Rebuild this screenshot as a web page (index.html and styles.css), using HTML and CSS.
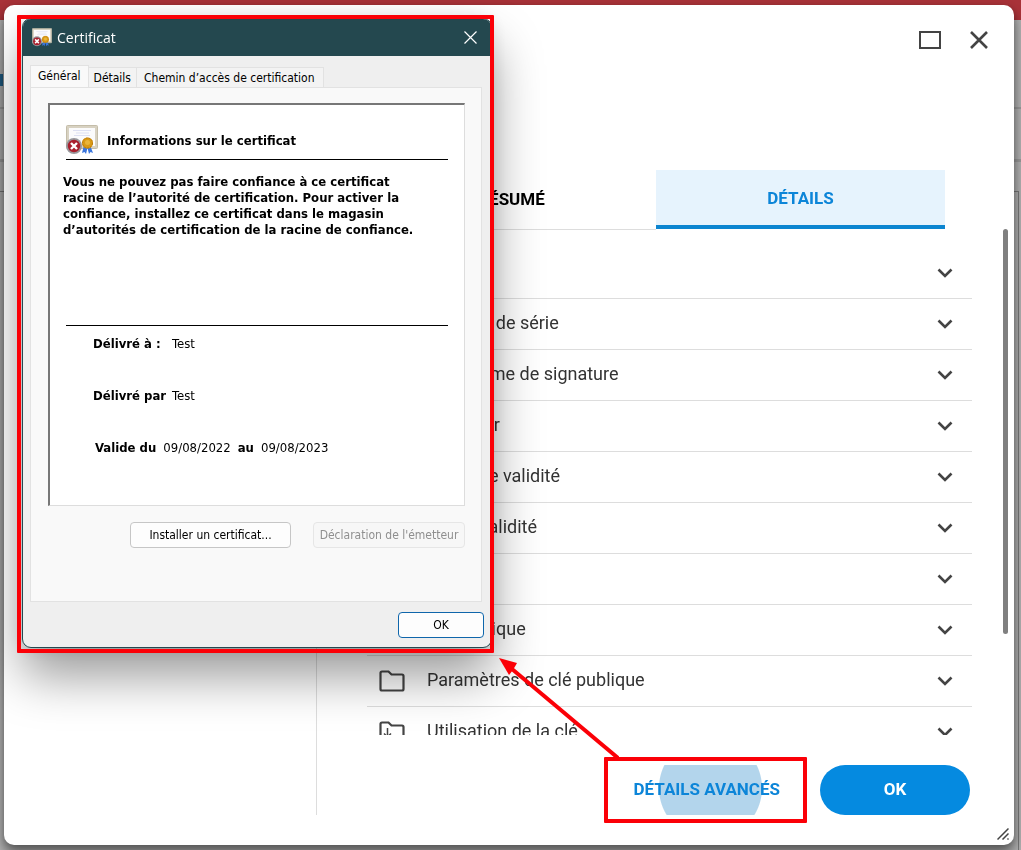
FILE: index.html
```html
<!DOCTYPE html>
<html lang="fr">
<head>
  <meta charset="UTF-8">
  <meta name="viewport" content="width=device-width, initial-scale=1.0">
  <title>Certificat</title>
  <link rel="stylesheet" href="styles.css">
</head>
<body>
  <svg class="sprite" aria-hidden="true">
    <symbol id="chevron" viewBox="0 0 16 16"><path d="M1.500 4.500L8 11l6.500-6.500" fill="none" stroke="#444" stroke-width="2.600"/></symbol>
    <symbol id="folder" viewBox="0 0 26 22"><path d="M1.500 19V3q0-1.500 1.500-1.500h6.500l3 3H23q1.500 0 1.500 1.500v13q0 1.500-1.500 1.500H3Q1.500 20.500 1.500 19z" fill="none" stroke="#444" stroke-width="2.200"/></symbol>
    <symbol id="cert" viewBox="0 0 32 30">
      <rect x="0.500" y="0.500" width="31" height="23" rx="1" fill="#d8d2c2" stroke="#c4bda9"/>
      <rect x="3" y="3" width="26" height="18" fill="#fbfbfc"/>
      <path d="M7 5.500h18M10 8h13M8 10.500h16" stroke="#dde0f2"/>
      <path d="M18 20l-2 8 2.500-1 1.500 2 2-8zM24 20l3 8-2.500-1-1.500 2-2-8z" fill="#3a75dc"/>
      <circle cx="21.500" cy="18" r="5.500" fill="#d99a16"/>
      <circle cx="21.500" cy="18" r="5" fill="none" stroke="#b9780a" stroke-dasharray="2 1"/>
      <circle cx="21.500" cy="17.500" r="2.500" fill="#e9b53a"/>
      <circle cx="8" cy="21" r="8" fill="#98989c"/>
      <circle cx="8" cy="21" r="6.200" fill="#a91f2d"/>
      <path d="M5 18l6 6M11 18l-6 6" stroke="#fff" stroke-width="2.400"/>
    </symbol>
  </svg>

  <div class="page">
    <div class="topbar"></div>
    <div class="page-head"></div>
    <div class="page-tools"></div>
    <div class="page-row"></div>
    <div class="page-content"></div>
  </div>

  <main class="modal">
    <header class="modal-head">
      <button class="icon-btn" type="button" aria-label="Agrandir"><svg width="22" height="18" viewBox="0 0 22 18"><rect x="1" y="1" width="20" height="16" fill="none" stroke="#444" stroke-width="2"/></svg></button>
      <button class="icon-btn" type="button" aria-label="Fermer"><svg width="18" height="18" viewBox="0 0 18 18"><path d="M1 1l16 16M17 1L1 17" stroke="#444" stroke-width="2.600"/></svg></button>
    </header>
    <div class="modal-body">
      <aside class="tree"></aside>
      <section class="content">
        <div class="tabs">
          <button class="tab" type="button">RÉSUMÉ</button>
          <button class="tab active" type="button">DÉTAILS</button>
        </div>
        <ul class="fields">
          <li><svg class="folder"><use href="#folder"/></svg><span>Version</span><svg class="chevron"><use href="#chevron"/></svg></li>
          <li><svg class="folder"><use href="#folder"/></svg><span>Numéro de série</span><svg class="chevron"><use href="#chevron"/></svg></li>
          <li><svg class="folder"><use href="#folder"/></svg><span>Algorithme de signature</span><svg class="chevron"><use href="#chevron"/></svg></li>
          <li><svg class="folder"><use href="#folder"/></svg><span>Émetteur</span><svg class="chevron"><use href="#chevron"/></svg></li>
          <li><svg class="folder"><use href="#folder"/></svg><span>Début de validité</span><svg class="chevron"><use href="#chevron"/></svg></li>
          <li><svg class="folder"><use href="#folder"/></svg><span>Fin de validité</span><svg class="chevron"><use href="#chevron"/></svg></li>
          <li><svg class="folder"><use href="#folder"/></svg><span>Objet</span><svg class="chevron"><use href="#chevron"/></svg></li>
          <li><svg class="folder"><use href="#folder"/></svg><span>Clé publique</span><svg class="chevron"><use href="#chevron"/></svg></li>
          <li><svg class="folder"><use href="#folder"/></svg><span>Paramètres de clé publique</span><svg class="chevron"><use href="#chevron"/></svg></li>
          <li><svg class="folder" viewBox="0 0 26 22"><use href="#folder"/><path d="M8.500 7v9M5 12.500l3.500 3.500 3.500-3.500" fill="none" stroke="#444" stroke-width="1.500"/></svg><span>Utilisation de la clé</span><svg class="chevron"><use href="#chevron"/></svg></li>
        </ul>
        <footer class="actions">
          <button class="btn-text" type="button">DÉTAILS AVANCÉS</button>
          <button class="btn-main" type="button">OK</button>
        </footer>
      </section>
    </div>
    <div class="scroll-thumb"></div>
    <svg class="grip" viewBox="0 0 12 12"><path d="M0.500 11.500l11-11M5.500 11.500l6-6M10.500 11.500l1-1" stroke="#444" stroke-width="1.500"/></svg>
  </main>

  <section class="dialog">
    <header class="dialog-title">
      <svg width="20" height="19"><use href="#cert"/></svg>
      <h1>Certificat</h1>
      <button type="button" aria-label="Fermer"><svg width="13" height="13" viewBox="0 0 13 13"><path d="M0.500 0.500l12 12M12.500 0.500l-12 12" stroke="#fff" stroke-width="1.200"/></svg></button>
    </header>
    <div class="dialog-body">
      <div class="dialog-tabs">
        <button class="active" type="button">Général</button>
        <button type="button">Détails</button>
        <button type="button">Chemin d’accès de certification</button>
      </div>
      <div class="panel">
        <div class="info">
          <div class="info-head">
            <svg width="32" height="30"><use href="#cert"/></svg>
            <h2>Informations sur le certificat</h2>
          </div>
          <p class="warning">Vous ne pouvez pas faire confiance à ce certificat<br>racine de l’autorité de certification. Pour activer la<br>confiance, installez ce certificat dans le magasin<br>d’autorités de certification de la racine de confiance.</p>
          <dl class="issued">
            <div><dt>Délivré à :</dt><dd>Test</dd></div>
            <div><dt>Délivré par</dt><dd>Test</dd></div>
            <div class="dates"><dt>Valide du</dt><dd>09/08/2022</dd><dt>au</dt><dd>09/08/2023</dd></div>
          </dl>
        </div>
        <div class="panel-actions">
          <button class="win-btn install" type="button">Installer un certificat...</button>
          <button class="win-btn" type="button" disabled>Déclaration de l'émetteur</button>
        </div>
      </div>
      <div class="dialog-actions">
        <button class="win-btn ok" type="button">OK</button>
      </div>
    </div>
  </section>

  <div class="callout callout-dialog"></div>
  <div class="callout callout-button"></div>
  <svg class="arrow" viewBox="0 0 120 101"><path d="M13 11l106 89" stroke="#fb0007" stroke-width="4"/><path d="M0 0l18 5-4 7-4 5z" fill="#fb0007"/></svg>
</body>
</html>
```
FILE: styles.css
```css
* {
  box-sizing: border-box;
}
body {
  margin: 0;
  height: 100vh;
  overflow: hidden;
  font-family: Roboto, sans-serif;
  color: #333;
  background: #b0b0b0;
}
button {
  font-family: inherit;
  cursor: pointer;
}
.sprite {
  position: absolute;
  width: 0;
  height: 0;
}

/* page behind the modal */
.page {
  height: 100vh;
  display: flex;
  flex-direction: column;
}
.topbar {
  height: 20px;
  background: #a83238;
}
.page-head {
  height: 89px;
  border-bottom: 2px solid #999;
  background: linear-gradient(#1f5f87, #1f5f87) 0 54px / 3px 12px no-repeat;
}
.page-tools {
  height: 53px;
  border-bottom: 3px solid #999;
}
.page-row {
  height: 29px;
}
.page-content {
  flex: 1;
  margin-right: 2px;
  border-top: 1px solid #777;
  border-right: 1px solid #777;
}

/* modal */
.modal {
  position: fixed;
  inset: 5px 7px 5px 4px;
  display: flex;
  flex-direction: column;
  background: #fff;
  border-radius: 10px;
  box-shadow: 0 10px 14px rgba(0, 0, 0, 0.35), 0 3px 8px rgba(0, 0, 0, 0.3);
}
.modal-head {
  display: flex;
  justify-content: flex-end;
  align-items: center;
  gap: 29px;
  height: 70px;
  padding-right: 26px;
}
.icon-btn {
  display: flex;
  padding: 0;
  border: none;
  background: none;
}
.modal-body {
  flex: 1;
  min-height: 0;
  display: flex;
  padding-bottom: 30px;
}
.tree {
  width: 313px;
  border-right: 1px solid #ddd;
}
.content {
  flex: 1;
  min-width: 0;
  display: flex;
  flex-direction: column;
  padding: 95px 42px 0 50px;
}
.tabs {
  display: flex;
  margin-right: 27px;
}
.tab {
  flex: 1;
  height: 60px;
  padding: 0 0 2px;
  border: none;
  border-bottom: 1px solid #ddd;
  background: none;
  color: #000;
  font-size: 17px;
  font-weight: 700;
}
.tab.active {
  height: 59px;
  padding-bottom: 0;
  border-bottom: 4px solid #0c85d0;
  background: #e6f3fd;
  color: #0c85d8;
}
.fields {
  flex: 1;
  min-height: 0;
  overflow: hidden;
  margin: 0;
  padding: 18px 0 0;
  list-style: none;
}
.fields li {
  display: flex;
  align-items: center;
  height: 51px;
  padding: 0 19px 0 12px;
  border-bottom: 1px solid #ddd;
  font-size: 18px;
}
.fields span {
  flex: 1;
  margin-left: 22px;
  padding-bottom: 4px;
}
.folder {
  width: 26px;
  height: 22px;
}
.chevron {
  width: 16px;
  height: 16px;
}
.actions {
  display: flex;
  justify-content: flex-end;
  gap: 15px;
  padding: 30px 2px 0 0;
}
.actions button {
  height: 50px;
  padding: 0 25px 3px;
  border: none;
  font-size: 17px;
  font-weight: 700;
}
.btn-text {
  background: radial-gradient(circle at calc(50% + 4px) 23px, #b3d5ec 51px, transparent 52px);
  color: #0c85d8;
}
.actions .btn-main {
  width: 150px;
  border-radius: 25px;
  background: #058ae0;
  color: #fff;
}
.scroll-thumb {
  position: absolute;
  top: 224px;
  right: 6px;
  width: 5px;
  height: 405px;
  border-radius: 3px;
  background: #808080;
}
.grip {
  position: absolute;
  right: 5px;
  bottom: 5px;
  width: 12px;
  height: 12px;
}

/* certificate window */
.dialog {
  position: absolute;
  top: 18px;
  left: 22px;
  width: 470px;
  border: 1px solid #24484f;
  border-radius: 9px;
  overflow: hidden;
  background: #efefef;
  box-shadow: 0 28px 50px rgba(0, 0, 0, 0.4), 0 0 18px rgba(0, 0, 0, 0.12);
  color: #000;
  font-family: "DejaVu Sans Condensed", "DejaVu Sans", sans-serif;
  font-size: 13px;
}
.dialog button {
  font-size: 12px;
}
.dialog-title {
  display: flex;
  align-items: center;
  gap: 5px;
  height: 37px;
  padding: 0 14px 0 9px;
  background: #24484f;
  color: #fff;
}
.dialog-title h1 {
  flex: 1;
  margin: 0;
  font-family: "Open Sans", sans-serif;
  font-size: 14px;
  font-weight: 400;
}
.dialog-title button {
  display: flex;
  padding: 0;
  border: none;
  background: none;
}
.dialog-body {
  padding: 9px 7px;
}
.dialog-tabs {
  display: flex;
  align-items: flex-end;
}
.dialog-tabs button {
  height: 20px;
  padding: 0 5px;
  border: 1px solid #e2e2e2;
  border-width: 1px 1px 0 0;
  background: #f3f3f3;
}
.dialog-tabs .active {
  height: 22px;
  padding: 0 7px 2px;
  border-left-width: 1px;
  background: #f9f9f9;
}
.dialog-tabs button:last-child {
  padding: 0 8px 0 7px;
}
.panel {
  margin-right: 2px;
  padding: 15px 16px 53px 17px;
  border: 1px solid #e2e2e2;
  background: #f9f9f9;
}
.info {
  height: 403px;
  padding: 20px 16px 0;
  border: 1px solid #ddd;
  border-top: 2px solid #777;
  border-left: 2px solid #777;
  background: #fff;
}
.info-head {
  display: flex;
  align-items: center;
  gap: 9px;
  height: 35px;
  padding-bottom: 4px;
  border-bottom: 1px solid #000;
}
.info h2 {
  margin: 0;
  font-size: 13px;
}
.warning {
  height: 151px;
  margin: 14px 0 0 -3px;
  font-weight: bold;
  line-height: 16px;
  white-space: nowrap;
}
.issued {
  display: flex;
  flex-direction: column;
  gap: 36px;
  margin: 0;
  padding: 10px 0 0 27px;
  border-top: 1px solid #000;
  line-height: 16px;
}
.issued div {
  display: flex;
}
.issued dt {
  width: 79px;
  font-weight: bold;
}
.issued dd {
  margin: 0;
}
.issued .dates {
  gap: 7px;
  padding-left: 2px;
}
.issued .dates dt {
  width: auto;
}
.panel-actions {
  display: flex;
  justify-content: flex-end;
  gap: 22px;
  margin-top: 16px;
}
.win-btn {
  width: 152px;
  height: 26px;
  padding: 0;
  border: 1px solid #c6c6c6;
  border-radius: 4px;
  background: #fdfdfd;
  color: #000;
  white-space: nowrap;
}
.win-btn:disabled {
  border-color: #e6e6e6;
  background: #f7f7f7;
  color: #8f8f8f;
}
.win-btn.install {
  width: 161px;
}
.win-btn.ok {
  width: 86px;
  border-color: #0f66ab;
}
.dialog-actions {
  display: flex;
  justify-content: flex-end;
  padding-top: 10px;
}

/* red annotations */
.callout {
  position: absolute;
  border: 4px solid #fb0007;
  border-radius: 1px;
}
.callout-dialog {
  top: 15px;
  left: 17px;
  width: 477px;
  height: 638px;
}
.callout-button {
  right: 214px;
  bottom: 27px;
  width: 203px;
  height: 66px;
}
.arrow {
  position: absolute;
  right: 402px;
  bottom: 91px;
  width: 120px;
  height: 101px;
}
```
